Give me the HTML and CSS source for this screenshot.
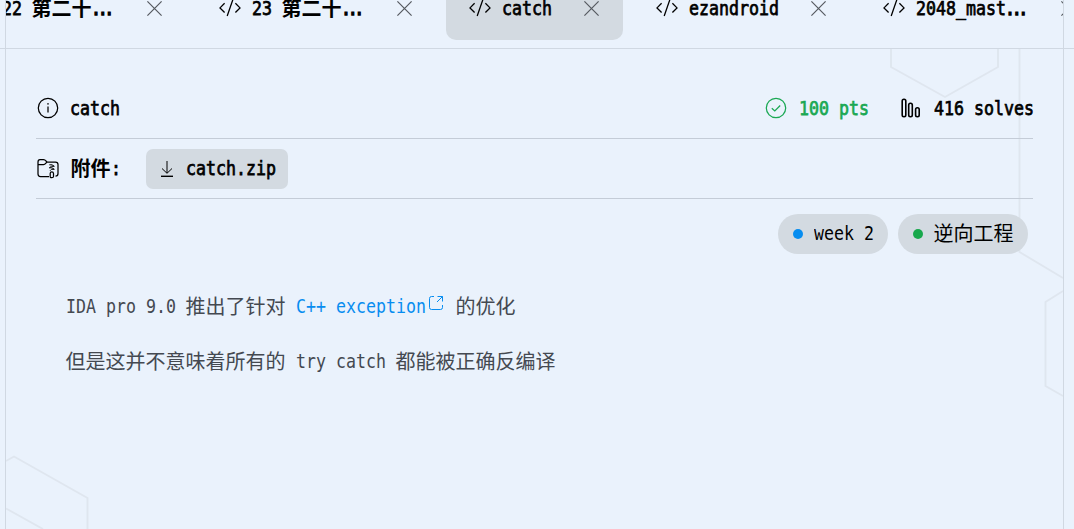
FILE: index.html
```
<!DOCTYPE html>
<html lang="zh">
<head>
<meta charset="utf-8">
<title>catch</title>
<link rel="stylesheet" href="styles.css">
</head>
<body>
<svg class="defs" width="0" height="0">
  <symbol id="code" viewBox="0 0 22 22"><path d="M5.600 6.300 1 10.900 5.600 15.500M16.400 6.300 21 10.900 16.400 15.500M13.800 2.800 8.200 19"/></symbol>
  <symbol id="close" viewBox="0 0 15 15"><path d="M.4.4l14.200 14.200M14.600.4.4 14.600"/></symbol>
</svg>
<svg class="pattern" viewBox="0 0 1074 529">
  <path d="M891 48V67L945 97L998 67V48M1019.500 48V252L1063 278M1063 291L1045.500 302V386L1063 396M6 461L14 456.500L87.500 498V529M6 508.500L43 529"/>
</svg>
<header class="tabbar">
  <div class="tabs">
    <div class="tab"><svg class="code"><use href="#code"/></svg><div class="label clipped"><span class="mono w3">22 </span><span>第二十</span><span class="mono dots">...</span></div><svg class="close"><use href="#close"/></svg></div>
    <div class="tab"><svg class="code"><use href="#code"/></svg><div class="label clipped"><span class="mono w3">23 </span><span>第二十</span><span class="mono dots">...</span></div><svg class="close"><use href="#close"/></svg></div>
    <div class="tab active"><svg class="code"><use href="#code"/></svg><div class="label"><span class="mono w5">catch</span></div><svg class="close"><use href="#close"/></svg></div>
    <div class="tab"><svg class="code"><use href="#code"/></svg><div class="label"><span class="mono w9">ezandroid</span></div><svg class="close"><use href="#close"/></svg></div>
    <div class="tab"><svg class="code"><use href="#code"/></svg><div class="label clipped"><span class="mono w9">2048_mast</span><span class="mono dots">...</span></div><svg class="close"><use href="#close"/></svg></div>
  </div>
</header>
<main class="panel">
  <section class="row">
    <svg class="icon" viewBox="0 0 24 24"><circle cx="12" cy="12" r="9.700"/><path d="M12 10.500V16.500"/><path class="dot" d="M12 7.200V8.600"/></svg>
    <span class="mono w5">catch</span>
    <div class="stats">
      <div class="stat green"><svg class="icon" viewBox="0 0 24 24"><circle cx="12" cy="12" r="9.700"/><path d="M7.800 12.200 10.800 15 16.200 9.500"/></svg><span class="mono w7">100 pts</span></div>
      <div class="stat"><svg class="icon bars" viewBox="0 0 24 24"><rect x="3.200" y="3.300" width="3.600" height="17.500" rx="1.700"/><rect x="9.700" y="7.300" width="3.600" height="13.500" rx="1.700"/><rect x="16.600" y="11.800" width="3.600" height="9" rx="1.700"/></svg><span class="mono w10">416 solves</span></div>
    </div>
  </section>
  <section class="row files">
    <svg class="icon" viewBox="0 0 24 24"><path d="M13 20.500H4.500Q2 20.500 2 18V6Q2 3.500 4 3.500H7.500Q9 3.500 10 5L11 6H19.500Q22 6 22 8.500V17.500Q22 20.200 19.500 20.200M2 8.500H7.500Q8.800 8.500 9.700 7.300L11 6M14.200 17.500Q14.200 15.800 15.800 15.800T17.500 17.500V20.500Q17.500 21.700 15.800 21.700T14.200 20.500Z"/><path class="zipper" d="M13.300 8.800H16L18.300 10.300H15.500L13.300 11.800H16L18.300 13.300H15.500L14 14.800"/></svg>
    <div class="filename">附件<span class="mono w1">:</span></div>
    <div class="download"><svg class="arrow" viewBox="0 0 14 18"><path d="M7 1V13M2 8.500 7 13.300 12 8.500"/><path class="base" d="M1 16.300H13"/></svg><span class="mono w9">catch.zip</span></div>
  </section>
  <section class="tags">
    <div class="tag"><i class="bullet blue"></i><span class="mono w6">week 2</span></div>
    <div class="tag"><i class="bullet emerald"></i><span class="name">逆向工程</span></div>
  </section>
  <article class="content">
    <p><span class="mono w12">IDA pro 9.0 </span>推出了针对<span class="mono w1"> </span><a><span class="mono w13">C++ exception</span><svg class="external" viewBox="0 0 16 16"><path d="M6 1.500H3.500Q1.500 1.500 1.500 3.500V12.500Q1.500 14.500 3.500 14.500H12.500Q14.500 14.500 14.500 12.500V10M9.500 1.500H14.500V6.500M14.500 1.500 9 7"/></svg></a><span class="mono w1"> </span>的优化</p>
    <p>但是这并不意味着所有的<span class="mono w11"> try catch </span>都能被正确反编译</p>
  </article>
</main>
</body>
</html>
```
FILE: styles.css
```
* { box-sizing: border-box; }
body {
  margin: 0;
  height: 529px;
  overflow: hidden;
  position: relative;
  background: #eaf2fc;
  color: #000;
  font: 20px/30px "Noto Sans CJK SC", sans-serif;
}
svg { flex: none; fill: none; stroke: currentColor; }
.defs, .pattern { position: absolute; top: 0; left: 0; }
.pattern { width: 1074px; height: 529px; stroke: #dfe6ef; stroke-width: 1.9; z-index: -1; }

/* Half-width Latin cells: each character takes 10px next to 20px ideographs */
.mono {
  display: inline-block;
  flex: none;
  height: 30px;
  vertical-align: top;
  font-family: "DejaVu Sans Mono", monospace;
  font-size: 20px;
  font-weight: 400;
  white-space: pre;
  transform: scaleX(.8305);
  transform-origin: 0 50%;
}
.tabs .mono, .row .mono { -webkit-text-stroke: .75px currentColor; }
.w1 { width: 10px; }
.w3 { width: 30px; }
.w5 { width: 50px; }
.w6 { width: 60px; }
.w7 { width: 70px; }
.w9 { width: 90px; }
.w10 { width: 100px; }
.w11 { width: 110px; }
.w12 { width: 120px; }
.w13 { width: 130px; }
.tabs .dots { width: 20px; letter-spacing: -4px; margin-left: -1px; -webkit-text-stroke-width: 1.4px; }

.tabbar { height: 49px; border-bottom: 1px solid #d0d8e2; }
.tabs {
  height: 48px;
  margin: 0 10px 0 5px;
  border: solid #d0d8e2;
  border-width: 0 1px;
  padding-bottom: 8px;
  display: flex;
  align-items: flex-end;
  gap: 10px;
  overflow: hidden;
  font-weight: 700;
}
.tab {
  display: flex;
  align-items: center;
  flex: none;
  height: 64px;
  padding: 0 24px 0 23px;
  border-radius: 10px;
}
.tab:first-child { margin-left: -60px; }
.active { background: #d3dae1; }
.code { width: 22px; height: 22px; margin-right: 10.5px; stroke-width: 1.3; }
.close { width: 15px; height: 15px; margin-left: 32.5px; stroke: #555a60; stroke-width: 1.2; }
.label { display: flex; height: 30px; }
.clipped { width: 113px; }

.panel {
  height: 480px;
  margin: 0 10px 0 5px;
  border: solid #d0d8e2;
  border-width: 0 1px;
  padding: 30px 30px 0;
}
.row {
  height: 60px;
  display: flex;
  align-items: center;
  padding-bottom: 1px;
  border-bottom: 1px solid #c4ccd7;
  font-weight: 700;
}
.icon { width: 24px; height: 24px; margin-right: 10px; stroke-width: 1.25; }
.icon .dot { stroke-width: 1.6; }
.icon .zipper { stroke-width: 1; }
.bars { stroke-width: 1.6; }
.stats { display: flex; gap: 31px; margin-left: auto; }
.stat { display: flex; align-items: center; }
.stat .mono { margin: 0 -.5px 0 .5px; }
.green { color: #1aa853; }
.filename { width: 76px; height: 30px; padding-left: .5px; }
.download {
  height: 40px;
  display: flex;
  align-items: center;
  padding: 0 12px 0 14px;
  margin-top: 1px;
  border-radius: 7px;
  background: #d3dae1;
}
.arrow { width: 14px; height: 18px; margin-right: 12px; }
.arrow .base { stroke-width: 1.4; }
.download .mono { margin-top: -2px; }
.tags { display: flex; justify-content: flex-end; gap: 10px; padding: 15px 5px 0; }
.tag {
  height: 40px;
  display: flex;
  align-items: center;
  gap: 10px;
  padding: 0 15px;
  border-radius: 20px;
  background: #d3dae1;
}
.tag .mono, .name { margin: -2px -.5px 0 .5px; }
.bullet { width: 10px; height: 10px; border-radius: 50%; }
.blue { background: #078df0; }
.emerald { background: #18a84c; }
.content { padding: 37px 29.5px; color: #444951; }
.content p { margin: 0 0 25px; height: 30px; white-space: nowrap; }
.content a { color: #078df0; }
.external { width: 16px; height: 16px; margin: 4px 2px 0; vertical-align: top; }
```
